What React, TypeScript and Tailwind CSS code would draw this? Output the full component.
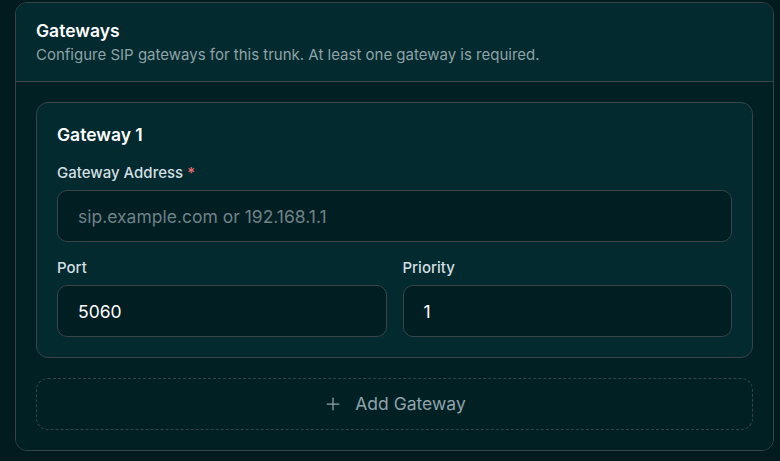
import { Plus } from "lucide-react";

function Field({
  label,
  required,
  value,
  placeholder,
}: {
  label: string;
  required?: boolean;
  value?: string;
  placeholder?: string;
}) {
  return (
    <div className="flex flex-col gap-[7px]">
      <label className="text-[15px] font-medium leading-5 text-[#d3dfe2]">
        {label}
        {required && <span className="ml-1 text-[#f0676b]">*</span>}
      </label>
      <input
        readOnly
        defaultValue={value}
        placeholder={placeholder}
        className="h-[52px] w-full rounded-[10px] border border-[#3a4446] bg-[#011e22] px-5 text-[17.5px] text-white outline-none placeholder:text-[#6f8287]"
      />
    </div>
  );
}

export default function App() {
  return (
    <div
      className="min-h-[461px] bg-[#021b1f] pl-[15px] pr-[6px] pt-[2px]"
      style={{ fontFamily: "Inter, 'Noto Sans', sans-serif" }}
    >
      <div className="overflow-hidden rounded-xl border border-[#3a4446] bg-[#01201f]">
        {/* Header */}
        <div className="flex flex-col gap-0.5 border-b border-[#3a4446] bg-[#022a2f] px-5 pb-4 pt-4">
          <h2 className="text-[17.5px] font-semibold leading-6 text-white">Gateways</h2>
          <p className="text-[15px] leading-5 text-[#8fa2a6]">
            Configure SIP gateways for this trunk. At least one gateway is required.
          </p>
        </div>

        {/* Body */}
        <div className="flex flex-col gap-5 bg-[#012024] p-5">
          <div className="flex flex-col rounded-xl border border-[#3a4446] bg-[#022a2f] p-5">
            <h3 className="text-[17.5px] font-semibold leading-6 text-white">Gateway 1</h3>
            <div className="mt-4">
              <Field label="Gateway Address" required placeholder="sip.example.com or 192.168.1.1" />
            </div>
            <div className="mt-4 grid grid-cols-2 gap-4">
              <Field label="Port" value="5060" />
              <Field label="Priority" value="1" />
            </div>
          </div>

          <button className="flex h-[52px] items-center justify-center gap-3 rounded-xl border border-dashed border-[#3a4446] text-[17.5px] text-[#8ea4aa]">
            <Plus size={20} strokeWidth={1.5} />
            Add Gateway
          </button>
        </div>
      </div>
    </div>
  );
}
